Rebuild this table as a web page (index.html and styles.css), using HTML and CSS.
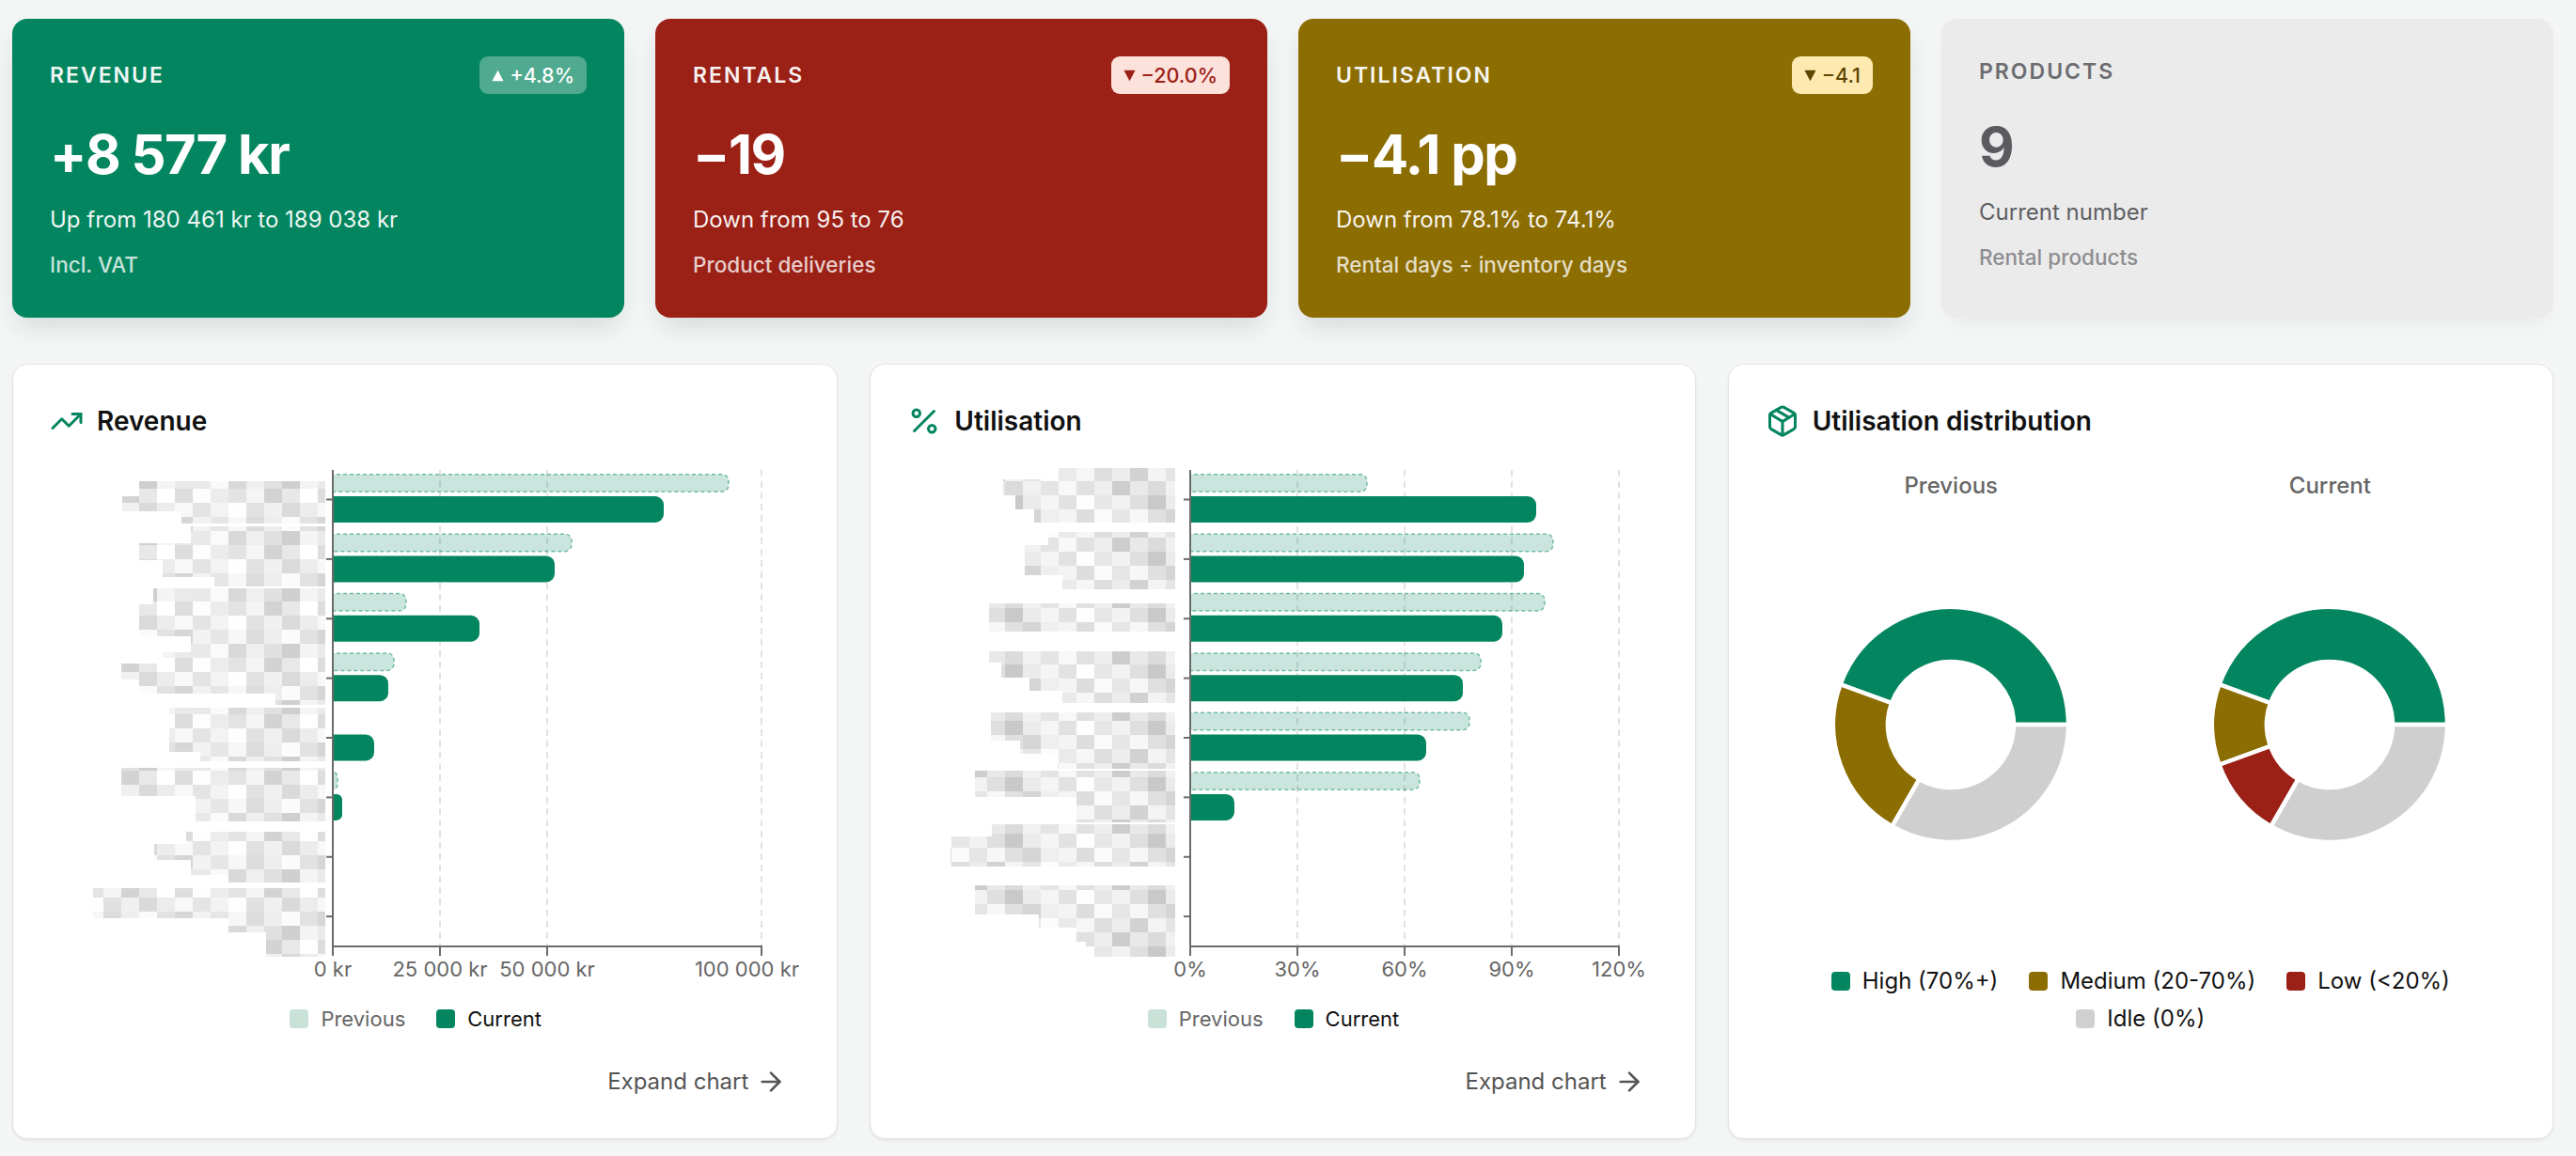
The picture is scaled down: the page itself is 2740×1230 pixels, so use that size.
FILE: index.html
```html
<!DOCTYPE html>
<html lang="en">
<head>
<meta charset="utf-8">
<title>Dashboard</title>
<link rel="stylesheet" href="styles.css">
</head>
<body>
<div class="page">
  <div class="kpis">
    <div class="kpi kpi-green">
      <div class="kpi-head">
        <span class="kpi-label">REVENUE</span>
        <span class="badge badge-green"><svg class="tri" viewBox="0 0 12 12"><path d="M6 0.8 L11.6 11.4 H0.4 Z"/></svg>+4.8%</span>
      </div>
      <div class="kpi-value">+8 577 kr</div>
      <div class="kpi-sub">Up from 180 461 kr to 189 038 kr</div>
      <div class="kpi-note">Incl. VAT</div>
    </div>
    <div class="kpi kpi-red">
      <div class="kpi-head">
        <span class="kpi-label">RENTALS</span>
        <span class="badge badge-red"><svg class="tri" viewBox="0 0 12 12"><path d="M0.4 0.6 H11.6 L6 11.2 Z"/></svg>−20.0%</span>
      </div>
      <div class="kpi-value">−19</div>
      <div class="kpi-sub">Down from 95 to 76</div>
      <div class="kpi-note">Product deliveries</div>
    </div>
    <div class="kpi kpi-olive">
      <div class="kpi-head">
        <span class="kpi-label">UTILISATION</span>
        <span class="badge badge-olive"><svg class="tri" viewBox="0 0 12 12"><path d="M0.4 0.6 H11.6 L6 11.2 Z"/></svg>−4.1</span>
      </div>
      <div class="kpi-value">−4.1 pp</div>
      <div class="kpi-sub">Down from 78.1% to 74.1%</div>
      <div class="kpi-note">Rental days ÷ inventory days</div>
    </div>
    <div class="kpi kpi-grey">
      <div class="kpi-head kpi-head-plain">
        <span class="kpi-label">PRODUCTS</span>
      </div>
      <div class="kpi-value">9</div>
      <div class="kpi-sub">Current number</div>
      <div class="kpi-note">Rental products</div>
    </div>
  </div>

  <div class="panels">
    <section class="panel">
      <header class="panel-head">
        <svg class="panel-icon" viewBox="0 0 24 24"><polyline points="22 7 13.5 15.5 8.5 10.5 2 17"/><polyline points="16 7 22 7 22 13"/></svg>
        <h2>Revenue</h2>
      </header>
      <svg class="bar-chart" width="797" height="556" viewBox="0 0 797 556">
        <defs>
          <pattern id="mzA" width="152" height="60" patternUnits="userSpaceOnUse">
            <rect x="0" y="0" width="19" height="15" fill="#f2f2f2"/><rect x="19" y="0" width="19" height="15" fill="#e6e6e6"/><rect x="38" y="0" width="19" height="15" fill="#f7f7f7"/><rect x="57" y="0" width="19" height="15" fill="#dcdcdc"/><rect x="76" y="0" width="19" height="15" fill="#eeeeee"/><rect x="95" y="0" width="19" height="15" fill="#fbfbfb"/><rect x="114" y="0" width="19" height="15" fill="#e2e2e2"/><rect x="133" y="0" width="19" height="15" fill="#d6d6d6"/>
            <rect x="0" y="15" width="19" height="15" fill="#e9e9e9"/><rect x="19" y="15" width="19" height="15" fill="#fafafa"/><rect x="38" y="15" width="19" height="15" fill="#d9d9d9"/><rect x="57" y="15" width="19" height="15" fill="#efefef"/><rect x="76" y="15" width="19" height="15" fill="#e0e0e0"/><rect x="95" y="15" width="19" height="15" fill="#cfcfcf"/><rect x="114" y="15" width="19" height="15" fill="#f4f4f4"/><rect x="133" y="15" width="19" height="15" fill="#eaeaea"/>
            <rect x="0" y="30" width="19" height="15" fill="#fdfdfd"/><rect x="19" y="30" width="19" height="15" fill="#ececec"/><rect x="38" y="30" width="19" height="15" fill="#e3e3e3"/><rect x="57" y="30" width="19" height="15" fill="#f5f5f5"/><rect x="76" y="30" width="19" height="15" fill="#d3d3d3"/><rect x="95" y="30" width="19" height="15" fill="#e8e8e8"/><rect x="114" y="30" width="19" height="15" fill="#ffffff"/><rect x="133" y="30" width="19" height="15" fill="#dddddd"/>
            <rect x="0" y="45" width="19" height="15" fill="#e4e4e4"/><rect x="19" y="45" width="19" height="15" fill="#f3f3f3"/><rect x="38" y="45" width="19" height="15" fill="#fefefe"/><rect x="57" y="45" width="19" height="15" fill="#e1e1e1"/><rect x="76" y="45" width="19" height="15" fill="#f0f0f0"/><rect x="95" y="45" width="19" height="15" fill="#dadada"/><rect x="114" y="45" width="19" height="15" fill="#ececec"/><rect x="133" y="45" width="19" height="15" fill="#f8f8f8"/>
          </pattern>
          <clipPath id="clipA"><rect x="301" y="0" width="496" height="556"/></clipPath>
        </defs>
        <g fill="url(#mzA)">
          <rect x="95" y="22" width="198" height="16"/><rect x="77" y="38" width="216" height="16"/><rect x="140" y="54" width="153" height="13"/>
          <rect x="150" y="70" width="143" height="18"/><rect x="95" y="88" width="198" height="18"/><rect x="120" y="106" width="173" height="18"/><rect x="175" y="124" width="118" height="10"/>
          <rect x="110" y="136" width="183" height="17"/><rect x="95" y="153" width="198" height="17"/><rect x="95" y="170" width="198" height="17"/><rect x="150" y="187" width="143" height="17"/>
          <rect x="120" y="204" width="173" height="12"/><rect x="76" y="216" width="217" height="17"/><rect x="95" y="233" width="198" height="15"/><rect x="240" y="248" width="53" height="12"/>
          <rect x="127" y="263" width="166" height="15"/><rect x="127" y="278" width="166" height="17"/><rect x="127" y="295" width="166" height="15"/><rect x="160" y="310" width="133" height="10"/>
          <rect x="76" y="327" width="217" height="15"/><rect x="76" y="342" width="217" height="15"/><rect x="155" y="357" width="138" height="17"/><rect x="155" y="374" width="138" height="10"/>
          <rect x="145" y="395" width="148" height="13"/><rect x="111" y="408" width="182" height="17"/><rect x="150" y="425" width="143" height="16"/><rect x="190" y="441" width="103" height="8"/>
          <rect x="46" y="455" width="247" height="16"/><rect x="46" y="471" width="247" height="16"/><rect x="190" y="487" width="103" height="15"/><rect x="230" y="502" width="63" height="26"/>
        </g>
        <g class="grid">
          <line x1="415" y1="10" x2="415" y2="517"/><line x1="529" y1="10" x2="529" y2="517"/><line x1="757" y1="10" x2="757" y2="517"/>
        </g>
        <g clip-path="url(#clipA)">
          <g class="prev">
            <rect x="291" y="14.75" width="431" height="18.5" rx="7"/>
            <rect x="291" y="78.125" width="264" height="18.5" rx="7"/>
            <rect x="291" y="141.5" width="88" height="18.5" rx="7"/>
            <rect x="291" y="204.875" width="75" height="18.5" rx="7"/>
            <rect x="291" y="331.625" width="15" height="18.5" rx="5"/>
          </g>
          <g class="cur">
            <rect x="291" y="38" width="362" height="28" rx="9"/>
            <rect x="291" y="101.375" width="246" height="28" rx="9"/>
            <rect x="291" y="164.75" width="166" height="28" rx="9"/>
            <rect x="291" y="228.125" width="69" height="28" rx="9"/>
            <rect x="291" y="291.5" width="54" height="28" rx="9"/>
            <rect x="291" y="354.875" width="20" height="28" rx="6"/>
          </g>
        </g>
        <g class="axis">
          <line x1="301" y1="10" x2="301" y2="518"/>
          <line x1="300" y1="517" x2="758" y2="517"/>
          <line x1="294" y1="41.5" x2="301" y2="41.5"/><line x1="294" y1="104.9" x2="301" y2="104.9"/><line x1="294" y1="168.25" x2="301" y2="168.25"/><line x1="294" y1="231.6" x2="301" y2="231.6"/><line x1="294" y1="295" x2="301" y2="295"/><line x1="294" y1="358.4" x2="301" y2="358.4"/><line x1="294" y1="421.75" x2="301" y2="421.75"/><line x1="294" y1="485.1" x2="301" y2="485.1"/>
          <line x1="301" y1="517" x2="301" y2="527"/><line x1="415" y1="517" x2="415" y2="527"/><line x1="529" y1="517" x2="529" y2="527"/><line x1="757" y1="517" x2="757" y2="527"/>
        </g>
        <g class="xlab">
          <text x="301" y="549" text-anchor="middle">0 kr</text>
          <text x="415" y="549" text-anchor="middle">25 000 kr</text>
          <text x="529" y="549" text-anchor="middle">50 000 kr</text>
          <text x="797" y="549" text-anchor="end">100 000 kr</text>
        </g>
      </svg>
      <div class="legend">
        <span class="legend-item legend-muted"><span class="swatch sw-prev"></span>Previous</span>
        <span class="legend-item"><span class="swatch sw-high"></span>Current</span>
      </div>
      <a class="expand">Expand chart<svg class="expand-icon" viewBox="0 0 24 24"><path d="M5 12h14"/><path d="m12 5 7 7-7 7"/></svg></a>
    </section>

    <section class="panel">
      <header class="panel-head">
        <svg class="panel-icon" viewBox="0 0 24 24"><line x1="19" y1="5" x2="5" y2="19"/><circle cx="6.5" cy="6.5" r="2.5"/><circle cx="17.5" cy="17.5" r="2.5"/></svg>
        <h2>Utilisation</h2>
      </header>
      <svg class="bar-chart" width="797" height="556" viewBox="0 0 797 556">
        <defs>
          <pattern id="mzB" width="152" height="60" patternUnits="userSpaceOnUse" patternTransform="translate(9 7)">
            <rect x="0" y="0" width="19" height="15" fill="#eaeaea"/><rect x="19" y="0" width="19" height="15" fill="#f6f6f6"/><rect x="38" y="0" width="19" height="15" fill="#dedede"/><rect x="57" y="0" width="19" height="15" fill="#ececec"/><rect x="76" y="0" width="19" height="15" fill="#d2d2d2"/><rect x="95" y="0" width="19" height="15" fill="#f3f3f3"/><rect x="114" y="0" width="19" height="15" fill="#e5e5e5"/><rect x="133" y="0" width="19" height="15" fill="#fcfcfc"/>
            <rect x="0" y="15" width="19" height="15" fill="#f8f8f8"/><rect x="19" y="15" width="19" height="15" fill="#e1e1e1"/><rect x="38" y="15" width="19" height="15" fill="#eeeeee"/><rect x="57" y="15" width="19" height="15" fill="#cdcdcd"/><rect x="76" y="15" width="19" height="15" fill="#e9e9e9"/><rect x="95" y="15" width="19" height="15" fill="#dbdbdb"/><rect x="114" y="15" width="19" height="15" fill="#f1f1f1"/><rect x="133" y="15" width="19" height="15" fill="#e4e4e4"/>
            <rect x="0" y="30" width="19" height="15" fill="#e2e2e2"/><rect x="19" y="30" width="19" height="15" fill="#fefefe"/><rect x="38" y="30" width="19" height="15" fill="#e7e7e7"/><rect x="57" y="30" width="19" height="15" fill="#f2f2f2"/><rect x="76" y="30" width="19" height="15" fill="#dfdfdf"/><rect x="95" y="30" width="19" height="15" fill="#c9c9c9"/><rect x="114" y="30" width="19" height="15" fill="#ebebeb"/><rect x="133" y="30" width="19" height="15" fill="#f5f5f5"/>
            <rect x="0" y="45" width="19" height="15" fill="#f4f4f4"/><rect x="19" y="45" width="19" height="15" fill="#dddddd"/><rect x="38" y="45" width="19" height="15" fill="#fafafa"/><rect x="57" y="45" width="19" height="15" fill="#e6e6e6"/><rect x="76" y="45" width="19" height="15" fill="#f7f7f7"/><rect x="95" y="45" width="19" height="15" fill="#e0e0e0"/><rect x="114" y="45" width="19" height="15" fill="#d5d5d5"/><rect x="133" y="45" width="19" height="15" fill="#efefef"/>
          </pattern>
          <clipPath id="clipB"><rect x="301" y="0" width="496" height="556"/></clipPath>
        </defs>
        <g fill="url(#mzB)">
          <rect x="160" y="8" width="125" height="12"/><rect x="102" y="20" width="183" height="17"/><rect x="115" y="37" width="170" height="15"/><rect x="135" y="52" width="150" height="14"/>
          <rect x="150" y="76" width="135" height="14"/><rect x="125" y="90" width="160" height="16"/><rect x="125" y="106" width="160" height="16"/><rect x="165" y="122" width="120" height="15"/>
          <rect x="87" y="152" width="198" height="15"/><rect x="87" y="167" width="198" height="15"/>
          <rect x="87" y="203" width="198" height="12"/><rect x="100" y="215" width="185" height="16"/><rect x="130" y="231" width="155" height="14"/><rect x="165" y="245" width="120" height="13"/>
          <rect x="89" y="268" width="196" height="14"/><rect x="89" y="282" width="196" height="16"/><rect x="120" y="298" width="165" height="14"/><rect x="160" y="312" width="125" height="16"/>
          <rect x="72" y="330" width="213" height="16"/><rect x="72" y="346" width="213" height="12"/><rect x="180" y="358" width="105" height="14"/><rect x="180" y="372" width="105" height="13"/>
          <rect x="90" y="387" width="195" height="13"/><rect x="46" y="400" width="239" height="17"/><rect x="46" y="417" width="239" height="15"/>
          <rect x="72" y="452" width="213" height="15"/><rect x="72" y="467" width="213" height="16"/><rect x="140" y="483" width="145" height="14"/><rect x="180" y="497" width="105" height="15"/><rect x="190" y="512" width="95" height="16"/>
        </g>
        <g class="grid">
          <line x1="415" y1="10" x2="415" y2="517"/><line x1="529" y1="10" x2="529" y2="517"/><line x1="643" y1="10" x2="643" y2="517"/><line x1="757" y1="10" x2="757" y2="517"/>
        </g>
        <g clip-path="url(#clipB)">
          <g class="prev">
            <rect x="291" y="14.75" width="198" height="18.5" rx="7"/>
            <rect x="291" y="78.125" width="396" height="18.5" rx="7"/>
            <rect x="291" y="141.5" width="387" height="18.5" rx="7"/>
            <rect x="291" y="204.875" width="319" height="18.5" rx="7"/>
            <rect x="291" y="268.25" width="307" height="18.5" rx="7"/>
            <rect x="291" y="331.625" width="254" height="18.5" rx="7"/>
          </g>
          <g class="cur">
            <rect x="291" y="38" width="378" height="28" rx="9"/>
            <rect x="291" y="101.375" width="365" height="28" rx="9"/>
            <rect x="291" y="164.75" width="342" height="28" rx="9"/>
            <rect x="291" y="228.125" width="300" height="28" rx="9"/>
            <rect x="291" y="291.5" width="261" height="28" rx="9"/>
            <rect x="291" y="354.875" width="57" height="28" rx="9"/>
          </g>
        </g>
        <g class="axis">
          <line x1="301" y1="10" x2="301" y2="518"/>
          <line x1="300" y1="517" x2="758" y2="517"/>
          <line x1="294" y1="41.5" x2="301" y2="41.5"/><line x1="294" y1="104.9" x2="301" y2="104.9"/><line x1="294" y1="168.25" x2="301" y2="168.25"/><line x1="294" y1="231.6" x2="301" y2="231.6"/><line x1="294" y1="295" x2="301" y2="295"/><line x1="294" y1="358.4" x2="301" y2="358.4"/><line x1="294" y1="421.75" x2="301" y2="421.75"/><line x1="294" y1="485.1" x2="301" y2="485.1"/>
          <line x1="301" y1="517" x2="301" y2="527"/><line x1="415" y1="517" x2="415" y2="527"/><line x1="529" y1="517" x2="529" y2="527"/><line x1="643" y1="517" x2="643" y2="527"/><line x1="757" y1="517" x2="757" y2="527"/>
        </g>
        <g class="xlab">
          <text x="301" y="549" text-anchor="middle">0%</text>
          <text x="415" y="549" text-anchor="middle">30%</text>
          <text x="529" y="549" text-anchor="middle">60%</text>
          <text x="643" y="549" text-anchor="middle">90%</text>
          <text x="757" y="549" text-anchor="middle">120%</text>
        </g>
      </svg>
      <div class="legend">
        <span class="legend-item legend-muted"><span class="swatch sw-prev"></span>Previous</span>
        <span class="legend-item"><span class="swatch sw-high"></span>Current</span>
      </div>
      <a class="expand">Expand chart<svg class="expand-icon" viewBox="0 0 24 24"><path d="M5 12h14"/><path d="m12 5 7 7-7 7"/></svg></a>
    </section>

    <section class="panel">
      <header class="panel-head">
        <svg class="panel-icon" viewBox="0 0 24 24"><path d="M11 21.73a2 2 0 0 0 2 0l7-4A2 2 0 0 0 21 16V8a2 2 0 0 0-1-1.73l-7-4a2 2 0 0 0-2 0l-7 4A2 2 0 0 0 3 8v8a2 2 0 0 0 1 1.73z"/><path d="M12 22V12"/><path d="m3.3 7 7.703 4.734a2 2 0 0 0 1.994 0L20.7 7"/><path d="m7.5 4.27 9 5.15"/></svg>
        <h2>Utilisation distribution</h2>
      </header>
      <div class="donuts">
        <div class="donut-col">
          <div class="donut-label">Previous</div>
          <svg class="donut" width="260" height="478" viewBox="0 0 260 478">
            <path class="seg-high" d="M255 239 A125 125 0 0 0 12.54 196.25 L67.04 216.08 A67 67 0 0 1 197 239 Z"/>
            <path class="seg-med" d="M12.54 196.25 A125 125 0 0 0 67.5 347.25 L96.5 297.02 A67 67 0 0 1 67.04 216.08 Z"/>
            <path class="seg-idle" d="M67.5 347.25 A125 125 0 0 0 255 239 L197 239 A67 67 0 0 1 96.5 297.02 Z"/>
          </svg>
        </div>
        <div class="donut-col">
          <div class="donut-label">Current</div>
          <svg class="donut" width="260" height="478" viewBox="0 0 260 478">
            <path class="seg-high" d="M255 239 A125 125 0 0 0 12.54 196.25 L67.04 216.08 A67 67 0 0 1 197 239 Z"/>
            <path class="seg-med" d="M12.54 196.25 A125 125 0 0 0 12.54 281.75 L67.04 261.92 A67 67 0 0 1 67.04 216.08 Z"/>
            <path class="seg-low" d="M12.54 281.75 A125 125 0 0 0 67.5 347.25 L96.5 297.02 A67 67 0 0 1 67.04 261.92 Z"/>
            <path class="seg-idle" d="M67.5 347.25 A125 125 0 0 0 255 239 L197 239 A67 67 0 0 1 96.5 297.02 Z"/>
          </svg>
        </div>
      </div>
      <div class="legend-donut">
        <div class="legend-row">
          <span class="legend-item"><span class="swatch sw-high"></span>High (70%+)</span>
          <span class="legend-item"><span class="swatch sw-med"></span>Medium (20-70%)</span>
          <span class="legend-item"><span class="swatch sw-low"></span>Low (&lt;20%)</span>
        </div>
        <div class="legend-row">
          <span class="legend-item"><span class="swatch sw-idle"></span>Idle (0%)</span>
        </div>
      </div>
    </section>
  </div>
</div>
</body>
</html>
```

FILE: styles.css
```css
* { box-sizing: border-box; }

body {
  margin: 0;
  background: #f4f5f5;
  font-family: Inter, "Noto Sans", "Liberation Sans", sans-serif;
  color: #111;
}

.page {
  padding: 20px 24px 18px 13px;
}

/* KPI cards */
.kpis {
  display: grid;
  grid-template-columns: repeat(4, 1fr);
  gap: 33px;
}

.kpi {
  min-height: 318px;
  border-radius: 16px;
  padding: 40px 40px 0;
  color: #fff;
  box-shadow: 0 14px 28px -8px rgba(30, 80, 66, 0.18);
}

.kpi-green { background: #03865f; }
.kpi-red { background: #9b2016; }
.kpi-olive { background: #8c6d02; }
.kpi-grey { background: #ebebeb; color: #5c5c60; box-shadow: 0 10px 24px -10px rgba(0, 0, 0, 0.08); }

.kpi-head {
  display: flex;
  justify-content: space-between;
  align-items: center;
  min-height: 40px;
}

.kpi-head-plain { min-height: 0; }

.kpi-label {
  font-size: 23px;
  font-weight: 600;
  letter-spacing: 2px;
  line-height: 32px;
  color: rgba(255, 255, 255, 0.94);
}

.kpi-grey .kpi-label { color: #6c6c70; }

.badge {
  display: inline-flex;
  align-items: center;
  gap: 6px;
  height: 40px;
  padding: 0 13px;
  border-radius: 9px;
  font-size: 21.5px;
  font-weight: 500;
}

.tri {
  width: 13px;
  height: 13px;
  fill: currentColor;
}

.badge-green { background: rgba(255, 255, 255, 0.3); color: #fff; }
.badge-red { background: #fde1db; color: #9b2016; }
.badge-olive { background: #feeab0; color: #5e4500; }

.kpi-value {
  margin-top: 29px;
  font-size: 58px;
  font-weight: 700;
  line-height: 70px;
  letter-spacing: -0.025em;
}

.kpi-grey .kpi-value { color: #5a5a5f; }

.kpi-sub {
  margin-top: 20px;
  font-size: 24px;
  line-height: 30px;
  color: rgba(255, 255, 255, 0.95);
}

.kpi-grey .kpi-sub { color: #5f5f63; }

.kpi-note {
  margin-top: 18px;
  font-size: 22.5px;
  font-weight: 500;
  line-height: 29px;
  color: rgba(255, 255, 255, 0.78);
}

.kpi-grey .kpi-note { color: #8d8d91; }

/* Panels */
.panels {
  display: grid;
  grid-template-columns: repeat(3, 1fr);
  gap: 34px;
  margin-top: 49px;
}

.panel {
  min-height: 825px;
  background: #fff;
  border: 1px solid #e2e2e2;
  border-radius: 16px;
  padding: 42px 39px;
  display: flex;
  flex-direction: column;
  box-shadow: 0 2px 3px rgba(0, 0, 0, 0.06);
}

.panel-head {
  display: flex;
  align-items: center;
  gap: 14px;
  height: 36px;
}

.panel-icon {
  width: 36px;
  height: 36px;
  fill: none;
  stroke: #03865f;
  stroke-width: 2;
  stroke-linecap: round;
  stroke-linejoin: round;
  flex: none;
}

.panel-head h2 {
  margin: 0;
  font-size: 28px;
  font-weight: 600;
  line-height: 36px;
  color: #111;
}

.bar-chart {
  display: block;
  margin-top: 24px;
}

.grid line {
  stroke: #d9d9d9;
  stroke-width: 1.5;
  stroke-dasharray: 7 5;
}

.prev rect {
  fill: rgba(3, 134, 95, 0.21);
  stroke: rgba(3, 134, 95, 0.5);
  stroke-width: 1.5;
  stroke-dasharray: 4 3;
}

.cur rect { fill: #03865f; }

.axis line {
  stroke: #6b6b6b;
  stroke-width: 2;
}

.xlab text {
  font-family: Inter, "Noto Sans", sans-serif;
  font-size: 22px;
  fill: #666;
}

.legend {
  margin-top: 23px;
  padding-right: 20px;
  display: flex;
  justify-content: center;
  gap: 33px;
  font-size: 22px;
  line-height: 30px;
}

.legend-item {
  display: inline-flex;
  align-items: center;
  gap: 13px;
  color: #111;
}

.legend-muted { color: #666; }

.swatch {
  width: 20px;
  height: 20px;
  border-radius: 4px;
  flex: none;
}

.sw-prev { background: #c9e2d7; }
.sw-high { background: #03865f; }
.sw-med { background: #8c6d02; }
.sw-low { background: #9b2016; }
.sw-idle { background: #d0d0d0; }

.expand {
  margin-top: 36px;
  margin-right: 15px;
  align-self: flex-end;
  display: inline-flex;
  align-items: center;
  gap: 8px;
  font-size: 24px;
  line-height: 30px;
  color: #555;
}

.expand-icon {
  width: 32px;
  height: 32px;
  fill: none;
  stroke: #555;
  stroke-width: 2;
  stroke-linecap: round;
  stroke-linejoin: round;
}

/* Donuts */
.donuts {
  margin-top: 36px;
  display: grid;
  grid-template-columns: 1fr 1fr;
  gap: 8px;
}

.donut-col {
  display: flex;
  flex-direction: column;
  align-items: center;
}

.donut-label {
  font-size: 24px;
  font-weight: 500;
  line-height: 30px;
  color: #666;
}

.donut { display: block; }

.donut path {
  stroke: #fff;
  stroke-width: 4.5;
  stroke-linejoin: miter;
}

.seg-high { fill: #03865f; }
.seg-med { fill: #8c6d02; }
.seg-low { fill: #9b2016; }
.seg-idle { fill: #cfcfcf; }

.legend-donut {
  margin-top: 19px;
  display: flex;
  flex-direction: column;
  gap: 10px;
  font-size: 24px;
  line-height: 30px;
}

.legend-row {
  display: flex;
  justify-content: center;
  gap: 33px;
}
```
